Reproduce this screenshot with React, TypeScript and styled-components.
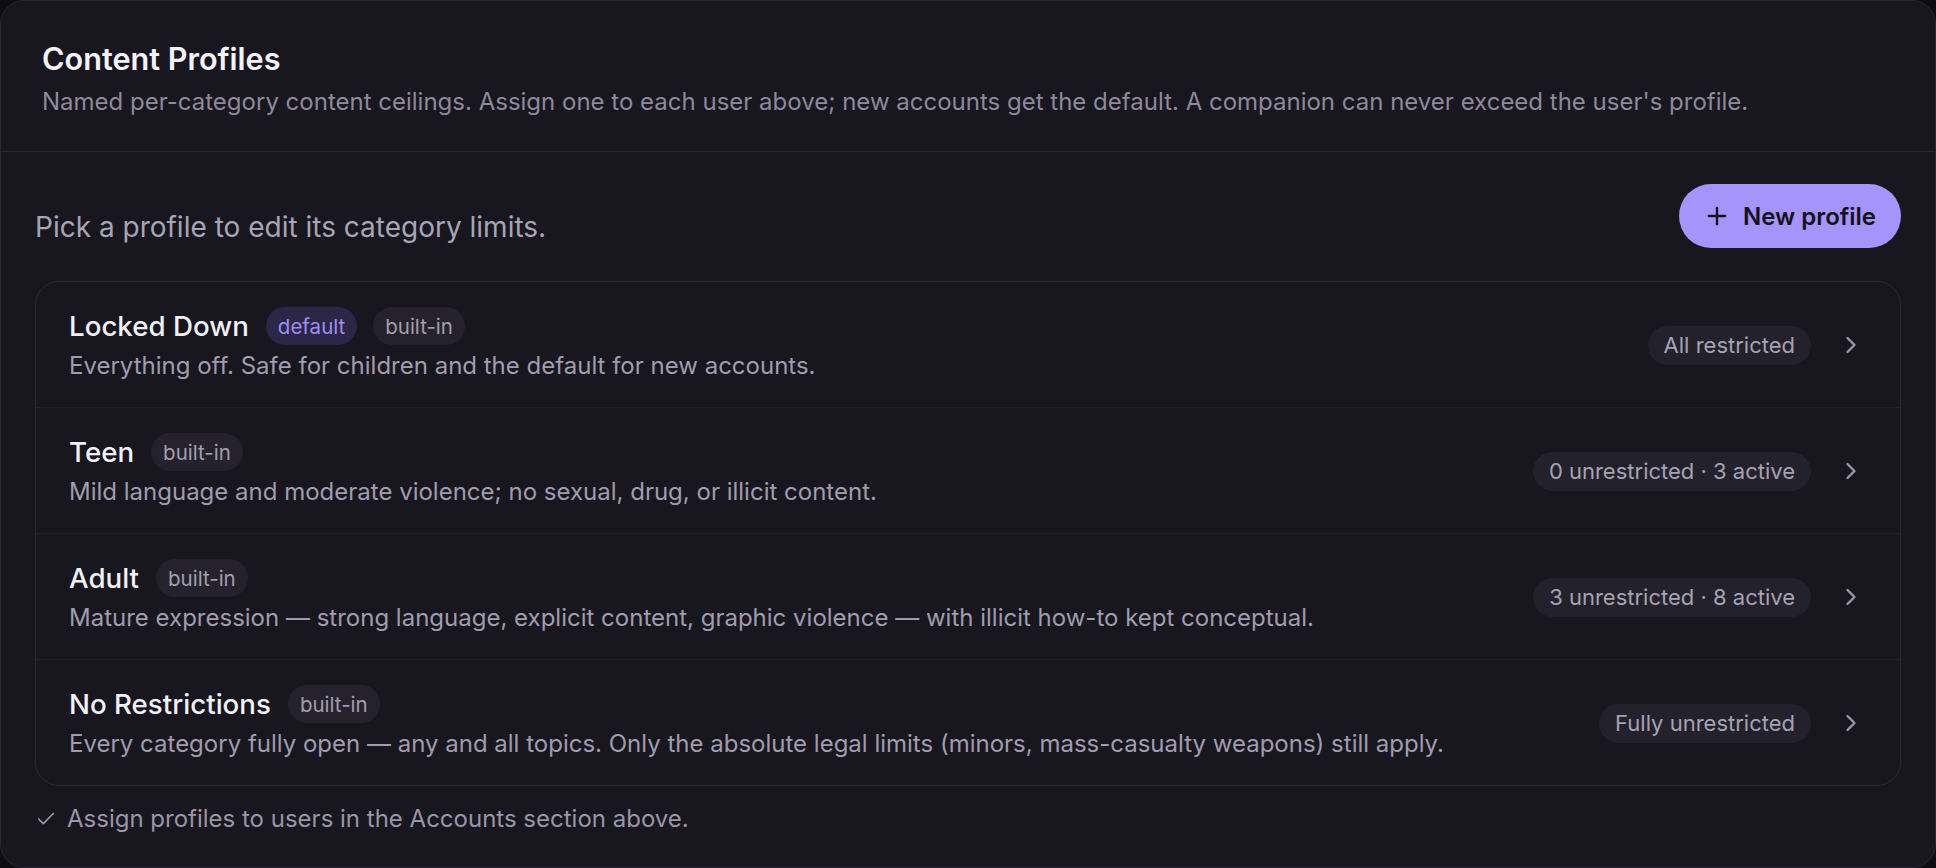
import React from "react";
import styled, { createGlobalStyle } from "styled-components";
import { Plus, ChevronRight, Check } from "lucide-react";

const GlobalStyle = createGlobalStyle`
  html, body { margin: 0; padding: 0; background: #0e0d12; }
  body { font-family: Inter, "Noto Sans", sans-serif; -webkit-font-smoothing: antialiased; }
  * { box-sizing: border-box; }
`;

const Card = styled.section`
  width: 1936px;
  height: 868px;
  background: #18161f;
  border: 1px solid #2a2832;
  border-radius: 24px;
  display: flex;
  flex-direction: column;
  overflow: hidden;
`;

const Header = styled.header`
  padding: 40px 41px 32px;
  border-bottom: 1px solid #2a2832;
`;

const Title = styled.h2`
  margin: 0;
  font-size: 30.6px;
  line-height: 36px;
  font-weight: 600;
  color: #f4f2f8;
`;

const Subtitle = styled.p`
  margin: 8px 0 0;
  font-size: 24px;
  line-height: 34px;
  color: #8e899b;
`;

const Body = styled.div`
  padding: 32px 34px 32px;
  display: flex;
  flex-direction: column;
`;

const Toolbar = styled.div`
  display: flex;
  justify-content: space-between;
  align-items: flex-end;
`;

const Hint = styled.p`
  margin: 0;
  font-size: 28px;
  line-height: 41px;
  color: #a9a4b6;
`;

const PrimaryButton = styled.button`
  height: 64px;
  padding: 0 25px 0 24px;
  display: inline-flex;
  align-items: center;
  gap: 12px;
  border: none;
  border-radius: 32px;
  background: #a594f9;
  color: #15121d;
  font-family: Inter, sans-serif;
  font-size: 24px;
  font-weight: 600;
  cursor: pointer;
`;

const List = styled.div`
  margin-top: 33px;
  border: 1px solid #2c2a34;
  border-radius: 24px;
  overflow: hidden;
`;

const Row = styled.div`
  display: flex;
  align-items: center;
  gap: 26px;
  padding: 25px 35px 24px 33px;
  & + & {
    border-top: 1px solid #221f29;
  }
`;

const RowMain = styled.div`
  flex: 1;
  min-width: 0;
  display: flex;
  flex-direction: column;
  gap: 4px;
`;

const NameLine = styled.div`
  display: flex;
  align-items: center;
  gap: 16px;
  height: 38px;
`;

const Name = styled.span`
  font-size: 27.7px;
  font-weight: 500;
  color: #f2f0f7;
  margin-right: 1px;
`;

const Badge = styled.span<{ $accent?: boolean }>`
  height: 38px;
  padding: 0 12px;
  display: inline-flex;
  align-items: center;
  border-radius: 19px;
  font-size: 20.5px;
  background: ${(p) => (p.$accent ? "#2c2647" : "#25222d")};
  color: ${(p) => (p.$accent ? "#9f8ef4" : "#a29eaf")};
`;

const Desc = styled.p`
  margin: 0;
  font-size: 24px;
  line-height: 34px;
  color: #a19cae;
  white-space: nowrap;
`;

const Pill = styled.span`
  height: 39px;
  padding: 0 16px;
  display: inline-flex;
  align-items: center;
  border-radius: 20px;
  background: #23212b;
  color: #a7a2b3;
  font-size: 22px;
  white-space: nowrap;
`;

const Chevron = styled(ChevronRight)`
  color: #9c98aa;
  flex-shrink: 0;
`;

const Footer = styled.div`
  margin-top: 15px;
  display: flex;
  align-items: center;
  gap: 10px;
  font-size: 24px;
  line-height: 36px;
  color: #9a95a7;
`;

type Profile = {
  name: string;
  isDefault?: boolean;
  desc: string;
  summary: string;
};

const profiles: Profile[] = [
  {
    name: "Locked Down",
    isDefault: true,
    desc: "Everything off. Safe for children and the default for new accounts.",
    summary: "All restricted",
  },
  {
    name: "Teen",
    desc: "Mild language and moderate violence; no sexual, drug, or illicit content.",
    summary: "0 unrestricted · 3 active",
  },
  {
    name: "Adult",
    desc: "Mature expression — strong language, explicit content, graphic violence — with illicit how-to kept conceptual.",
    summary: "3 unrestricted · 8 active",
  },
  {
    name: "No Restrictions",
    desc: "Every category fully open — any and all topics. Only the absolute legal limits (minors, mass-casualty weapons) still apply.",
    summary: "Fully unrestricted",
  },
];

export default function App() {
  return (
    <>
      <GlobalStyle />
      <Card>
        <Header>
          <Title>Content Profiles</Title>
          <Subtitle>
            Named per-category content ceilings. Assign one to each user above; new accounts get the default. A
            companion can never exceed the user's profile.
          </Subtitle>
        </Header>
        <Body>
          <Toolbar>
            <Hint>Pick a profile to edit its category limits.</Hint>
            <PrimaryButton>
              <Plus size={28} strokeWidth={2} />
              New profile
            </PrimaryButton>
          </Toolbar>
          <List>
            {profiles.map((p) => (
              <Row key={p.name}>
                <RowMain>
                  <NameLine>
                    <Name>{p.name}</Name>
                    {p.isDefault && <Badge $accent>default</Badge>}
                    <Badge>built-in</Badge>
                  </NameLine>
                  <Desc>{p.desc}</Desc>
                </RowMain>
                <Pill>{p.summary}</Pill>
                <Chevron size={28} strokeWidth={2} />
              </Row>
            ))}
          </List>
          <Footer>
            <Check size={22} strokeWidth={1.8} />
            Assign profiles to users in the Accounts section above.
          </Footer>
        </Body>
      </Card>
    </>
  );
}
